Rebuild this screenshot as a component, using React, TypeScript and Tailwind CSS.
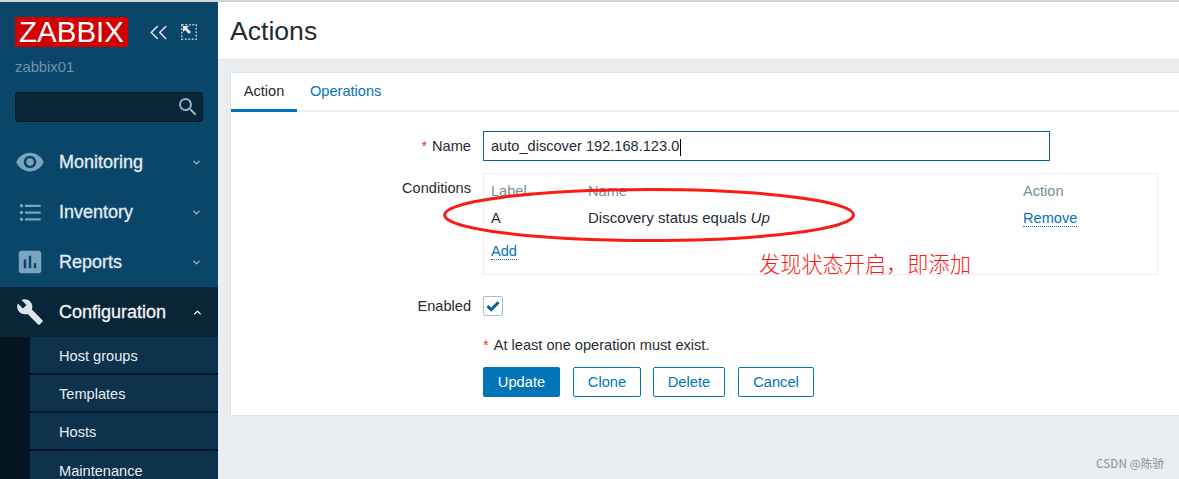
import { ChevronDown, ChevronUp, ChevronsLeft } from "lucide-react";
import { MdAssessment, MdBuild, MdFormatListBulleted, MdSearch, MdVisibility } from "react-icons/md";
import type { ReactNode } from "react";

function MenuRow({ icon, label, active }: { icon: ReactNode; label: string; active?: boolean }) {
  return (
    <div className={`flex h-[50px] items-center ${active ? "bg-[#082638] text-[#f2f5f7]" : "text-[#e4ecf1]"}`}>
      <span className="flex w-[59px] justify-center pl-[1px]">{icon}</span>
      <span className="flex-1 text-[18px] [-webkit-text-stroke:0.3px_currentColor]">{label}</span>
      {active ? (
        <ChevronUp size={11} strokeWidth={3} className="mr-[15px] text-white" />
      ) : (
        <ChevronDown size={11} strokeWidth={2.5} className="mr-[16px] text-[#a9c0cf]" />
      )}
    </div>
  );
}

function SubItem({ label, last }: { label: string; last?: boolean }) {
  return (
    <div
      className={`flex h-[38px] items-center bg-[#0e324c] pl-[29px] pt-[4px] text-[14.6px] text-[#e8eef2] ${
        last ? "" : "border-b-2 border-[#04182a]"
      }`}
    >
      {label}
    </div>
  );
}

function Sidebar() {
  return (
    <aside className="h-[477px] w-[218px] shrink-0 overflow-hidden bg-[#0a466a]">
      <div className="flex items-center pl-[15px] pt-[15px]">
        <div className="flex h-[30px] w-[113px] items-center justify-center bg-[#d40000] text-[29.5px] font-light leading-none text-white">
          ZABBIX
        </div>
        <ChevronsLeft size={29} strokeWidth={1.3} className="ml-[16px] text-[#dfe8ee]" />
        <svg width="16" height="16" viewBox="0 0 16 16" className="ml-[8px]" fill="none">
          <rect x="0.75" y="0.75" width="14.5" height="14.5" stroke="#a9bfcd" strokeWidth="1.5" strokeDasharray="2 1.5" />
          <path d="M2 2h6L6 4l4 4-2 2-4-4-2 2z" fill="#dfe8ee" />
        </svg>
      </div>
      <div className="pl-[15px] pt-[10px] text-[14.8px] leading-[20px] text-[#6e93ab]">zabbix01</div>
      <div className="ml-[15px] mt-[15px] flex h-[30px] w-[188px] items-center justify-end rounded-[3px] border border-[#041a28] bg-[#082638] pr-[2px]">
        <MdSearch size={24} className="text-[#8fb0c4]" />
      </div>
      <div className="pt-[15px]">
        <MenuRow icon={<MdVisibility size={30} className="text-[#7ba4bf]" />} label="Monitoring" />
        <MenuRow icon={<MdFormatListBulleted size={27} className="text-[#7ba4bf]" />} label="Inventory" />
        <MenuRow icon={<MdAssessment size={30} className="text-[#7ba4bf]" />} label="Reports" />
        <MenuRow active icon={<MdBuild size={28} className="text-[#dbe5ec]" />} label="Configuration" />
      </div>
      <div className="ml-0 border-l-[30px] border-[#03151f]">
        <SubItem label="Host groups" />
        <SubItem label="Templates" />
        <SubItem label="Hosts" />
        <SubItem label="Maintenance" last />
      </div>
    </aside>
  );
}

function LinkText({ children }: { children: ReactNode }) {
  return <span className="border-b border-dotted border-[#0275b8] leading-[16px] text-[#0275b8]">{children}</span>;
}

function OutlineButton({ label, width }: { label: string; width: string }) {
  return (
    <button className={`h-[30px] rounded-[2px] border border-[#0275b8] bg-white text-[14.7px] text-[#0275b8] ${width}`}>
      {label}
    </button>
  );
}

function ActionForm() {
  return (
    <section className="ml-[12px] mr-0 mt-[12px] h-[344px] border border-r-0 border-[#dfe4e7] bg-white">
      <div className="flex h-[39px] border-b-2 border-[#ebeef0] text-[14.6px]">
        <div className="flex h-[39px] w-[66px] items-center justify-center border-b-[3px] border-[#0275b8] pt-[2px] text-[#1f2c33]">
          Action
        </div>
        <div className="flex items-center pl-[13px] text-[#0275b8]">Operations</div>
      </div>

      <div className="grid grid-cols-[240px_1fr] gap-x-[12px] pt-[19px] text-[14.6px] text-[#1f2c33]">
        <div className="flex h-[30px] items-center justify-end pt-[2px]">
          <span className="mr-[5px] text-[#e33734]">*</span>Name
        </div>
        <div className="flex h-[30px] w-[567px] items-center border border-[#00629e] pl-[7px] pt-[2px]">
          auto_discover 192.168.123.0
          <span className="ml-[1px] h-[17px] w-px bg-black" />
        </div>

        <div className="mt-[12px] pt-[5px] text-right leading-[20px]">Conditions</div>
        <div className="mt-[12px] h-[102px] w-[675px] border border-[#ebeef0] pl-[7px]">
          <div className="grid grid-cols-[97px_435px_1fr] pt-[7px]">
            <span className="leading-[21px] text-[#768d99]">Label</span>
            <span className="leading-[21px] text-[#768d99]">Name</span>
            <span className="leading-[21px] text-[#768d99]">Action</span>
            <span className="mt-[6px] leading-[21px]">A</span>
            <span className="mt-[5px] text-[15px] leading-[21px]">
              Discovery status equals <em>Up</em>
            </span>
            <span className="mt-[6px] leading-[21px]">
              <LinkText>Remove</LinkText>
            </span>
          </div>
          <div className="pt-[12px] leading-[21px]">
            <LinkText>Add</LinkText>
          </div>
        </div>

        <div className="mt-[21px] flex h-[20px] items-center justify-end pt-[2px]">Enabled</div>
        <div className="mt-[21px] flex h-[20px] w-[20px] items-center justify-center rounded-[2px] border border-[#acbbc2]">
          <svg width="14" height="12" viewBox="0 0 14 12" fill="none">
            <path d="M1.5 6l3.7 3.7L12.5 2.3" stroke="#00629e" strokeWidth="3" />
          </svg>
        </div>

        <div className="mt-[19px] [grid-column:2] leading-[20px]">
          <span className="mr-[5px] text-[#e33734]">*</span>At least one operation must exist.
        </div>
        <div className="mt-[12px] flex [grid-column:2]">
          <button className="h-[30px] w-[77px] rounded-[2px] bg-[#0275b8] text-[14.7px] text-white">Update</button>
          <OutlineButton label="Clone" width="ml-[13px] w-[68px]" />
          <OutlineButton label="Delete" width="ml-[12px] w-[72px]" />
          <OutlineButton label="Cancel" width="ml-[13px] w-[76px]" />
        </div>
      </div>
    </section>
  );
}

export default function App() {
  return (
    <div className="relative h-[479px] w-[1179px] overflow-hidden bg-[#ebeef0] font-['Liberation_Sans',Arial,sans-serif]">
      <div className="h-[2px] bg-[#d4d4d4]" />
      <div className="flex">
        <Sidebar />
        <main className="min-w-0 flex-1">
          <header className="flex h-[58px] items-center border-b border-[#dfe4e7] bg-white pl-[12px] pt-[2px] text-[26.6px] text-[#1f2c33]">
            Actions
          </header>
          <ActionForm />
        </main>
      </div>

      {/* hand drawn annotation on top of the screenshot */}
      <svg className="absolute left-[440px] top-[184px]" width="418" height="62" viewBox="0 0 418 62" fill="none">
        <ellipse cx="209" cy="31" rx="204.5" ry="25.5" stroke="#fb1a14" strokeWidth="3" />
      </svg>
      <div className="absolute left-[759px] top-[249px] font-['Noto_Sans_CJK_SC',sans-serif] text-[21.2px] font-light leading-[28px] text-[#fb1a14]">
        发现状态开启，即添加
      </div>
      <div className="absolute left-[1096px] top-[455px] font-['Noto_Sans_CJK_SC',sans-serif] text-[11.5px] leading-[16px] tracking-[0.2px] text-[#8a8f94]">
        CSDN @陈骄
      </div>
    </div>
  );
}
